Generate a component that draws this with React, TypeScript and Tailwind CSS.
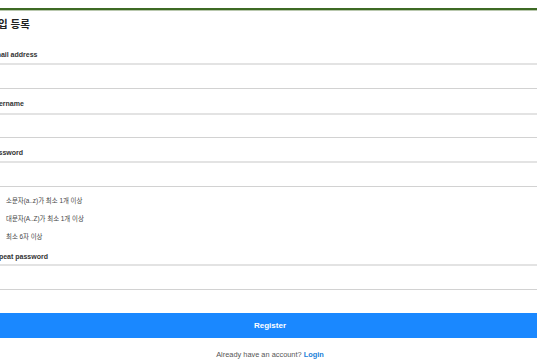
export default function App() {
  const font = { fontFamily: '"Liberation Sans", "Noto Sans CJK KR", sans-serif' };

  const label = "h-[10px] leading-[10px] text-[7px] font-bold text-[#333]";
  const input =
    "w-full bg-white border-t-2 border-t-[#e3e3e3] border-b border-b-[#d2d2d2] border-x border-x-[#d2d2d2]";

  return (
    <div className="w-[537px] h-[360px] overflow-hidden bg-white" style={font}>
      <div className="ml-[-10px] w-[560px] pt-[8px]">
        <div className="h-[2px] bg-[#3d6a24]" />
        <div className="h-[1px] bg-[#b9c8ae]" />

        <h1 className="mt-[6px] ml-[-21px] h-[14px] leading-[14px] text-[10.5px] font-semibold text-[#222] whitespace-nowrap">
          회원가입 등록
        </h1>

        <div className={`mt-[19px] ${label}`}>Email address</div>
        <div className={`mt-[3px] h-[26px] ${input}`} />

        <div className={`mt-[10px] ${label}`}>Username</div>
        <div className={`mt-[4px] h-[25px] ${input}`} />

        <div className={`mt-[10px] ${label}`}>Password</div>
        <div className={`mt-[3px] h-[26px] ${input}`} />

        <ul className="mt-[5px] pl-[16px] text-[6.4px] text-[#444]">
          <li className="h-[18px] leading-[18px]">소문자(a..z)가 최소 1개 이상</li>
          <li className="h-[18px] leading-[18px]">대문자(A..Z)가 최소 1개 이상</li>
          <li className="h-[18px] leading-[18px]">최소 6자 이상</li>
        </ul>

        <div className={`mt-[6px] ${label}`}>Repeat password</div>
        <div className={`mt-[2px] h-[26px] ${input}`} />

        <button className="mt-[23px] w-full h-[25px] bg-[#1a88ff] text-white text-[8px] font-bold">
          Register
        </button>

        <p className="mt-[12px] h-[10px] leading-[10px] text-center text-[7.4px] text-[#555]">
          Already have an account? <span className="font-bold text-[#1a7fd8]">Login</span>
        </p>
      </div>
    </div>
  );
}
